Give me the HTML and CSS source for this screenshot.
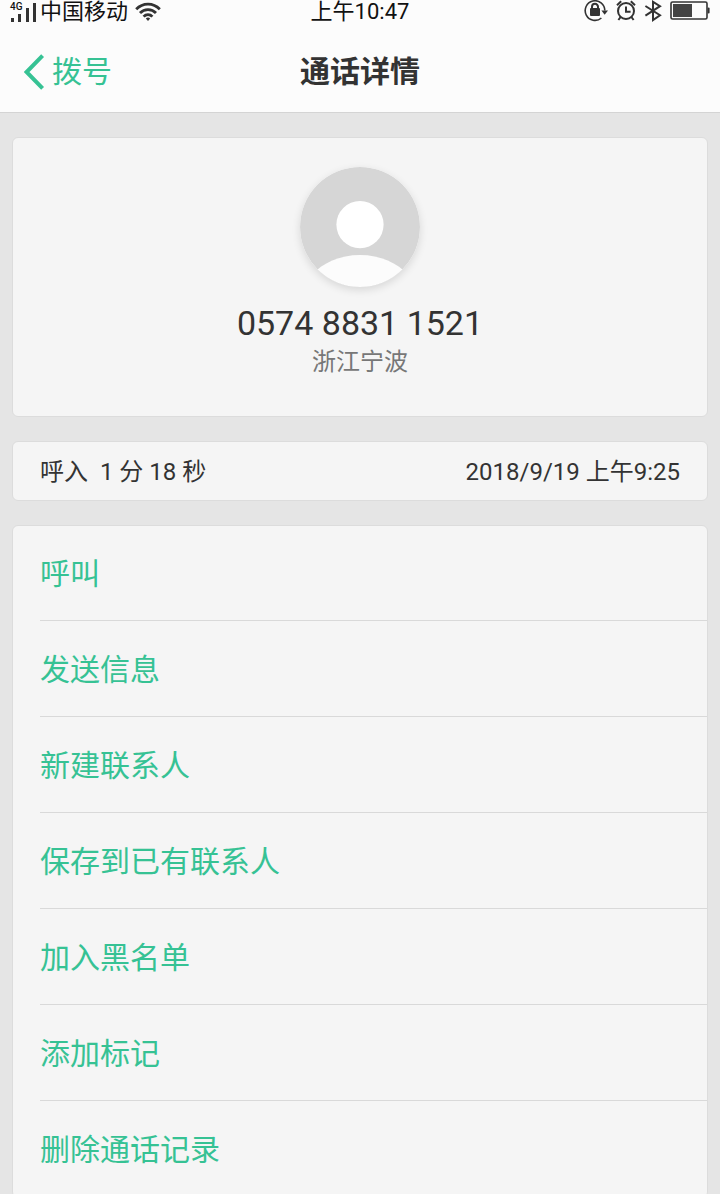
FILE: index.html
```
<!DOCTYPE html>
<html lang="zh-CN">
<head>
    <meta charset="UTF-8">
    <meta name="viewport" content="width=device-width, initial-scale=1.0">
    <title>通话详情</title>
    <link rel="stylesheet" href="styles.css">
</head>
<body>

<div class="status-bar">
    <div class="status-left">
        <span class="signal">
            <span class="network">4G</span>
            <svg width="26" height="20" viewBox="0 0 26 20" fill="#333">
                <rect x="1" y="16" width="3" height="4"/>
                <rect x="8" y="12" width="3" height="8"/>
                <rect x="16" y="6" width="3" height="14"/>
                <rect x="23" y="1" width="3" height="19"/>
            </svg>
        </span>
        <span class="carrier">中国移动</span>
        <svg class="wifi" width="26" height="20" viewBox="0 0 26 20" fill="none" stroke="#333" stroke-width="2.8">
            <path d="M1.2 7.2C7.8 0.4 18.2 0.4 24.8 7.2"/>
            <path d="M5 11C9.4 6.4 16.6 6.4 21 11"/>
            <path d="M8.6 14.6C11 12 15 12 17.4 14.6"/>
            <path d="M10.8 16.4Q13 14.6 15.2 16.4L13 19Z" fill="#333" stroke="none"/>
        </svg>
    </div>
    <span class="clock">上午10:47</span>
    <div class="status-right">
        <svg width="24" height="22" viewBox="0 0 24 22" fill="none" stroke="#333" stroke-width="1.6">
            <path d="M17.4 18A9.8 9.8 0 1 1 20.8 10.6"/>
            <path d="M17.4 10.6H24L20.7 14.8Z" fill="#333" stroke="none"/>
            <rect x="6" y="8" width="10" height="8" rx="1" fill="#333" stroke="none"/>
            <path d="M8 9V6.8A3 3 0 0 1 14 6.8V9" stroke-width="2"/>
        </svg>
        <svg width="20" height="22" viewBox="0 0 20 22" fill="none" stroke="#333" stroke-width="2">
            <circle cx="10" cy="11" r="8"/>
            <path d="M10 6.4V11.8H14.6"/>
            <path d="M1 5.2L5.2 1.2M19 5.2L14.8 1.2M4.6 17L2.4 20M15.4 17L17.6 20"/>
        </svg>
        <svg width="18" height="22" viewBox="0 0 18 22" fill="none" stroke="#333" stroke-width="2">
            <path d="M1.4 6L16 15.2L9 20V1.8L16 6.2L1.4 15.6"/>
        </svg>
        <svg width="40" height="20" viewBox="0 0 40 20">
            <rect x="1" y="1" width="36" height="17" rx="1.6" fill="none" stroke="#333" stroke-width="1.6"/>
            <rect x="3" y="3" width="19" height="13" fill="#444"/>
            <rect x="37.6" y="6.4" width="2" height="6" rx="1" fill="#333"/>
        </svg>
    </div>
</div>

<header class="nav-bar">
    <a class="back" href="#">
        <svg width="22" height="36" viewBox="0 0 22 36" fill="none" stroke="#36c294" stroke-width="4">
            <path d="M18.6 1.6L2.6 18L18.6 34.4"/>
        </svg>
        拨号
    </a>
    <h1>通话详情</h1>
</header>

<main>
    <section class="card profile">
        <svg class="avatar" width="120" height="120" viewBox="0 0 120 120">
            <clipPath id="avatarClip"><circle cx="60" cy="60" r="60"/></clipPath>
            <g clip-path="url(#avatarClip)">
                <rect width="120" height="120" fill="#d6d6d6"/>
                <circle cx="60" cy="57.6" r="23.6" fill="#fff"/>
                <path d="M12 108C22 96 40 88 60 88S98 96 108 108V120H12Z" fill="#fcfcfc"/>
            </g>
        </svg>
        <div class="number">0574 8831 1521</div>
        <div class="place">浙江宁波</div>
    </section>

    <section class="card call-info">
        <span class="duration">呼入  1 分 18 秒</span>
        <span>2018/9/19 上午9:25</span>
    </section>

    <section class="card actions">
        <button>呼叫</button>
        <button>发送信息</button>
        <button>新建联系人</button>
        <button>保存到已有联系人</button>
        <button>加入黑名单</button>
        <button>添加标记</button>
        <button>删除通话记录</button>
    </section>
</main>

</body>
</html>
```
FILE: styles.css
```
* {
    box-sizing: border-box;
}

body {
    margin: 0;
    height: 100vh;
    display: flex;
    flex-direction: column;
    overflow: hidden;
    font-family: Roboto, "Noto Sans CJK SC", sans-serif;
    background-color: #e5e5e5;
    color: #333;
}

svg {
    display: block;
    flex: none;
}

.status-bar {
    flex: none;
    height: 24px;
    display: grid;
    grid-template-columns: 1fr auto 1fr;
    align-items: center;
    padding: 0 10px;
    background-color: #fcfcfc;
    color: #111;
    font-size: 22px;
    line-height: 24px;
}

.status-left,
.status-right {
    display: flex;
    align-items: center;
}

.status-left {
    gap: 4px;
}

.status-right {
    justify-content: flex-end;
    gap: 8px;
    padding-bottom: 2px;
}

.signal {
    position: relative;
}

.network {
    position: absolute;
    top: 0;
    left: 0;
    font-size: 10px;
    line-height: 10px;
    font-weight: 500;
}

.wifi {
    margin-left: 3px;
}

.nav-bar {
    flex: none;
    height: 89px;
    display: grid;
    grid-template-columns: 1fr auto 1fr;
    align-items: center;
    padding: 8px 24px 0;
    background-color: #fcfcfc;
    border-bottom: 1px solid #d4d4d4;
}

.back {
    display: flex;
    align-items: center;
    gap: 6px;
    color: #36c294;
    font-size: 30px;
    line-height: 40px;
    text-decoration: none;
}

h1 {
    margin: 0;
    font-size: 30px;
    line-height: 40px;
    font-weight: bold;
}

main {
    flex: 1;
    min-height: 0;
    display: flex;
    flex-direction: column;
    gap: 24px;
    padding: 24px 12px 0;
    overflow-y: auto;
    scrollbar-width: none;
}

.card {
    flex: none;
    background-color: #f5f5f5;
    border: 1px solid #dcdcdc;
    border-radius: 6px;
}

.profile {
    display: flex;
    flex-direction: column;
    align-items: center;
    padding: 29px 0 34px;
}

.avatar {
    border-radius: 50%;
    box-shadow: 0 3px 8px rgba(0, 0, 0, 0.12);
}

.number {
    margin-top: 16px;
    font-size: 34px;
    line-height: 40px;
}

.place {
    color: #777;
    font-size: 24px;
    line-height: 39px;
}

.call-info {
    display: flex;
    justify-content: space-between;
    padding: 2px 27px 0;
    font-size: 24px;
    line-height: 56px;
}

.duration {
    white-space: pre;
}

.actions {
    padding-left: 27px;
}

.actions button {
    display: block;
    width: 100%;
    height: 96px;
    padding: 0 0 4px;
    border: none;
    border-bottom: 1px solid #d9d9d9;
    background: none;
    color: #36c294;
    font-family: inherit;
    font-size: 30px;
    text-align: left;
    cursor: pointer;
}

.actions button:first-child {
    height: 95px;
}

.actions button:last-child {
    border-bottom: none;
}
```
